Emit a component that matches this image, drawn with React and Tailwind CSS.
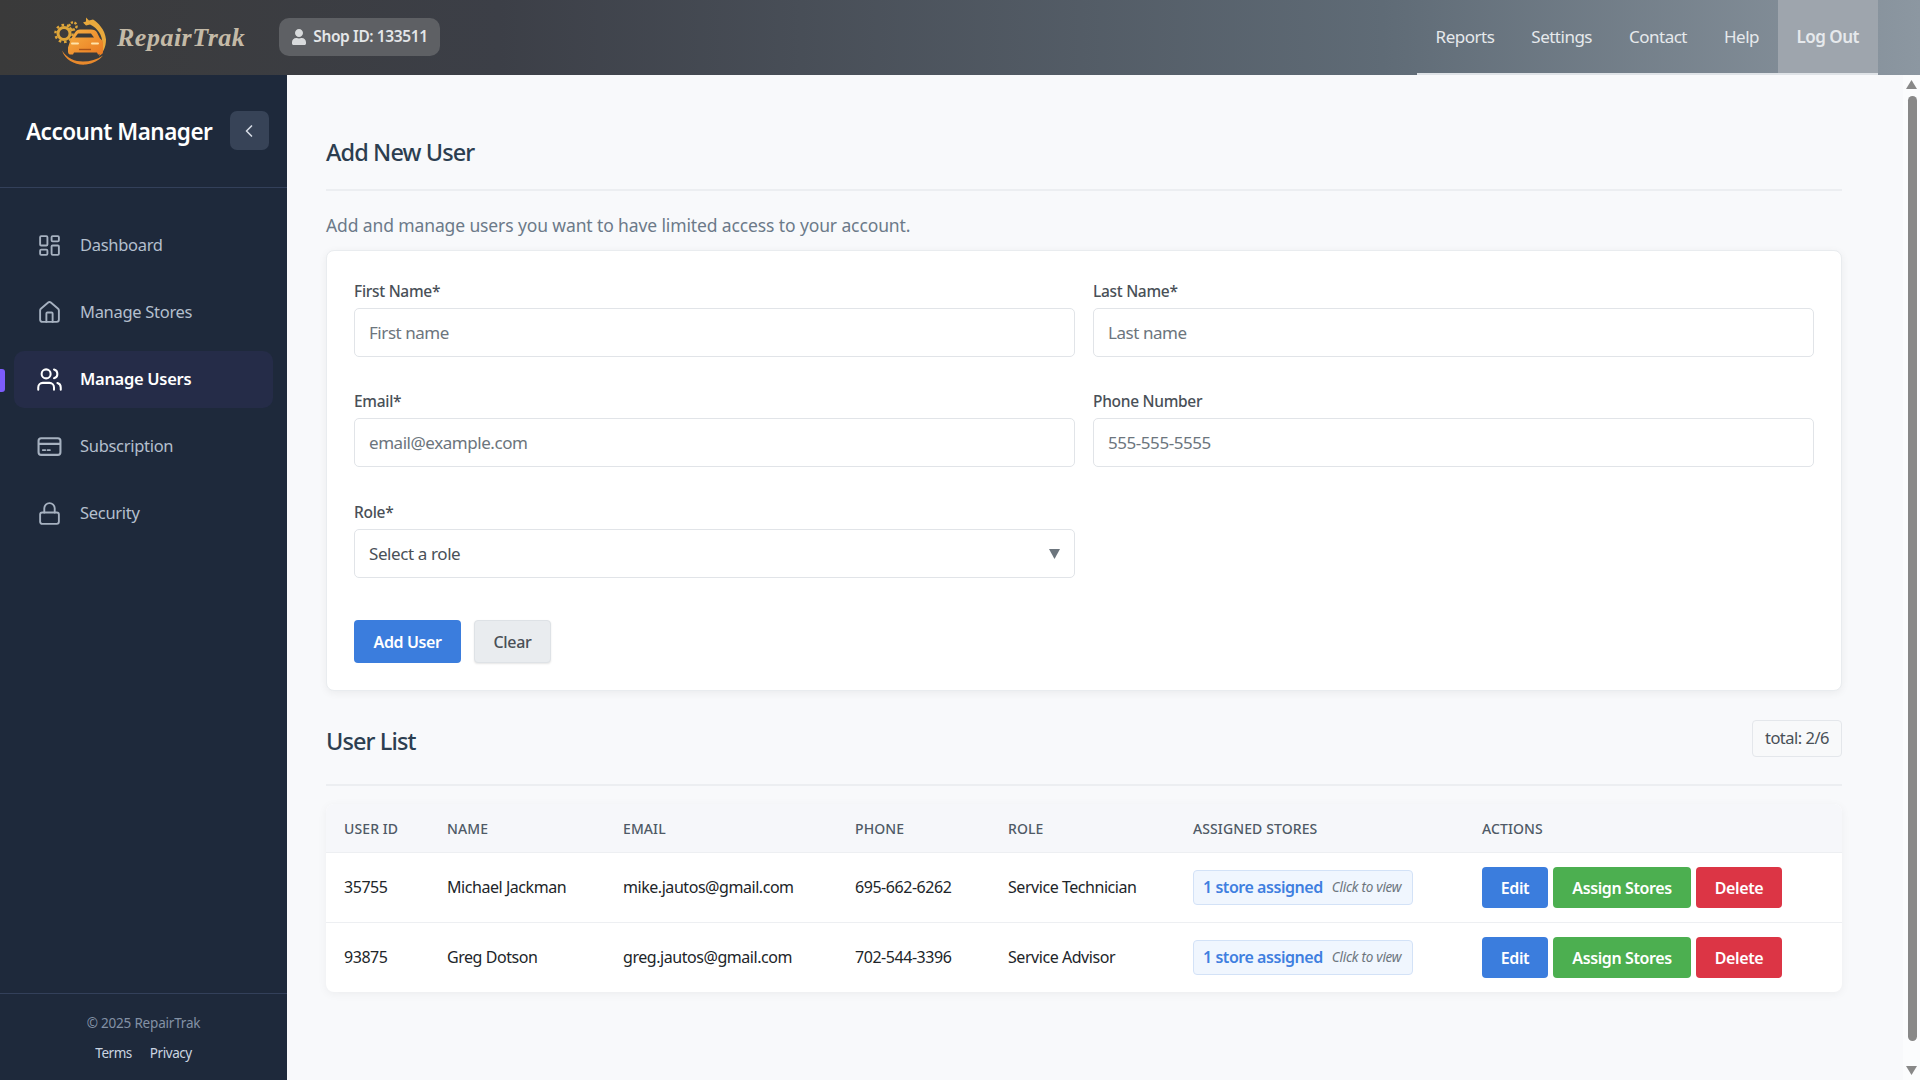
import { ChevronLeft, House, LayoutDashboard, Lock, Users } from "lucide-react";
import { FaUser } from "react-icons/fa";

const font = "font-['Noto_Sans','Open_Sans',sans-serif]";

const Logo = () => (
  <svg viewBox="0 -2.5 60 60" className="w-[60px] h-[60px] shrink-0">
    <defs>
      <linearGradient id="carFill" x1="0" y1="0" x2="1" y2="1">
        <stop offset="0" stopColor="#f6b042" />
        <stop offset="1" stopColor="#ea7a22" />
      </linearGradient>
    </defs>
    <circle cx="14" cy="23" r="6" fill="none" stroke="#dda53a" strokeWidth="3" />
    <circle cx="14" cy="23" r="8.6" fill="none" stroke="#dda53a" strokeWidth="2.4" strokeDasharray="2.6 2.8" />
    <circle cx="23" cy="15.5" r="3.6" fill="none" stroke="#dda53a" strokeWidth="2.4" strokeDasharray="2.2 1.4" />
    <path d="M36 7 l3 3 4-1 c5 3 12 10 13 20 c0 8-3 13-7 17 c3-6 4-11 3-17 c-1-7-7-13-12-15 l-4 1 -3-3 3-1 z" fill="#e9a93c" />
    <path d="M18 37 l3-9 c1-1 2-3 4-6 c1-2 3-3 5-3 h11 c3 0 5 1 6 3 l3 6 c2 1 3 3 3 5 v8 c0 2-1 3-2 3 h-3 l-1-2 h-23 l-1 2 h-3 c-1 0-2-1-2-3 z" fill="url(#carFill)" />
    <path d="M25 27 l3-4 h13 l3 4 z" fill="#3a3a3a" />
    <path d="M22 33 h6 M42 33 h6" stroke="#ffe2a8" strokeWidth="2" strokeLinecap="round" />
    <path d="M29 39 h12" stroke="#a9541a" strokeWidth="1.4" />
    <path d="M12 40 c3 10 14 15 24 14 c7-1 13-4 17-9 c-6 4-13 6-20 6 c-8 0-16-3-21-11 z" fill="#e8892c" />
  </svg>
);

const CardIcon = ({ className }) => (
  <svg viewBox="0 0 24 24" fill="none" stroke="currentColor" strokeWidth="2" strokeLinecap="round" className={className}>
    <rect x="1.5" y="4" width="21" height="16" rx="2.5" />
    <path d="M2 9.5h20" />
    <path d="M5.5 15.5h2.5M10 15.5h2.5" strokeWidth="1.6" />
  </svg>
);

const navItems = [
  { label: "Dashboard", Icon: LayoutDashboard, size: "w-[25px] h-[25px]" },
  { label: "Manage Stores", Icon: House, size: "w-[25px] h-[25px]" },
  { label: "Manage Users", Icon: Users, size: "w-[27px] h-[27px] -mx-[1px]", active: true },
  { label: "Subscription", Icon: CardIcon, size: "w-[25px] h-[25px]" },
  { label: "Security", Icon: Lock, size: "w-[25px] h-[25px]" },
];

const users = [
  { id: "35755", name: "Michael Jackman", email: "mike.jautos@gmail.com", phone: "695-662-6262", role: "Service Technician" },
  { id: "93875", name: "Greg Dotson", email: "greg.jautos@gmail.com", phone: "702-544-3396", role: "Service Advisor" },
];

const columns = ["USER ID", "NAME", "EMAIL", "PHONE", "ROLE", "ASSIGNED STORES", "ACTIONS"];

function Field({ label, placeholder }) {
  return (
    <div className="flex flex-col">
      <label className="text-[15.5px] leading-[20px] font-medium text-[#495057] tracking-[-0.3px] mb-[7px]">{label}</label>
      <input
        placeholder={placeholder}
        className="h-[49px] px-[14px] bg-white border border-[#e1e4e8] rounded-[5px] text-[17px] tracking-[-0.45px] outline-none placeholder:text-[#6c757d]"
      />
    </div>
  );
}

function Header() {
  return (
    <header className="h-[75px] shrink-0 flex items-center pl-[50px] pr-[42px] bg-[linear-gradient(90deg,#3a3a3a_0%,#3c3f47_26%,#5f6b76_72%,#8c97a1_100%)]">
      <Logo />
      <span className="ml-[7px] w-[162px] font-['Liberation_Serif',serif] font-bold italic text-[26px] leading-none tracking-[0.5px] text-[#c4baa7]">
        RepairTrak
      </span>
      <div className="h-[38px] w-[161px] mb-[1px] flex items-center justify-center gap-[6px] rounded-[10px] bg-[#5e6064] text-[#e4e6e8] text-[15.5px] font-semibold tracking-[-0.4px]">
        <FaUser className="w-[16px] h-[16px] text-[#d8dadc]" />
        Shop ID: 133511
      </div>
      <nav className="ml-auto h-full flex border-b-2 border-[#dfe3e7] text-[17px] tracking-[-0.5px] text-[#e6e9ec]">
        {["Reports", "Settings", "Contact", "Help"].map((item) => (
          <a key={item} className="flex items-center px-[18.5px]">{item}</a>
        ))}
        <a className="flex items-center px-[19px] bg-[#9ea5ad] font-semibold">Log Out</a>
      </nav>
    </header>
  );
}

function Sidebar() {
  return (
    <aside className="w-[287px] shrink-0 flex flex-col bg-[#1e293b]">
      <div className="h-[113px] shrink-0 flex items-center justify-between pl-[26px] pr-[18px] border-b border-[#33405a]">
        <span className="text-white text-[22.5px] font-semibold tracking-[-0.5px] pt-[1px]">Account Manager</span>
        <button className="w-[39px] h-[39px] mb-[1px] flex items-center justify-center rounded-[7px] bg-[#374357] text-[#d5dbe4]">
          <ChevronLeft className="w-[20px] h-[20px] -ml-[1px]" strokeWidth={2} />
        </button>
      </div>
      <div className="flex flex-col gap-[10px] pt-[29px] px-[14px]">
        {navItems.map(({ label, Icon, size, active }) => (
          <div
            key={label}
            className={
              active
                ? "relative h-[57px] flex items-center pl-[23px] rounded-[10px] bg-[#252c48] text-white font-semibold"
                : "h-[57px] flex items-center pl-[23px] rounded-[10px] text-[#b4bfcd]"
            }
          >
            {active && <span className="absolute left-[-14px] top-[18px] w-[5px] h-[23px] rounded-r-[3px] bg-[#7c5cfc]" />}
            <Icon className={`${size} ${active ? "text-white" : "text-[#a6b1c0]"}`} strokeWidth={1.8} />
            <span className="ml-[18px] text-[16.5px] tracking-[-0.3px]">{label}</span>
          </div>
        ))}
      </div>
      <div className="mt-auto h-[87px] border-t border-[#33405a] flex flex-col items-center pt-[19px]">
        <span className="text-[13.5px] leading-[20px] tracking-[-0.2px] text-[#8391a5]">© 2025 RepairTrak</span>
        <div className="flex gap-[18px] mt-[10px] text-[13.5px] leading-[20px] tracking-[-0.45px] text-[#cbd5e1]">
          <a>Terms</a>
          <a>Privacy</a>
        </div>
      </div>
    </aside>
  );
}

function UserTable() {
  return (
    <div className="rounded-[8px] bg-white shadow-[0_2px_10px_rgba(0,0,0,0.05)] overflow-hidden">
      <table className="w-full table-fixed border-collapse">
        <colgroup>
          <col className="w-[103px]" />
          <col className="w-[176px]" />
          <col className="w-[232px]" />
          <col className="w-[153px]" />
          <col className="w-[185px]" />
          <col className="w-[289px]" />
          <col />
        </colgroup>
        <thead>
          <tr className="h-[48px] bg-[#f6f7fa] border-b border-[#edeff2]">
            {columns.map((col) => (
              <th key={col} className="px-[18px] pt-[1px] text-left text-[14px] font-medium text-[#4f5a66] tracking-[0.1px]">{col}</th>
            ))}
          </tr>
        </thead>
        <tbody>
          {users.map((u) => (
            <tr key={u.id} className="h-[70px] border-b border-[#edeff2] last:border-b-0 text-[16px] tracking-[-0.45px] text-[#212529]">
              <td className="px-[18px]">{u.id}</td>
              <td className="px-[18px]">{u.name}</td>
              <td className="px-[18px]">{u.email}</td>
              <td className="px-[18px]">{u.phone}</td>
              <td className="px-[18px]">{u.role}</td>
              <td className="px-[18px]">
                <div className="h-[35px] w-[220px] flex items-center pl-[9px] rounded-[4px] border border-[#d3e2f7] bg-[#f0f6fe]">
                  <span className="text-[16px] font-semibold text-[#3f7fe0] tracking-[-0.45px]">1 store assigned</span>
                  <span className="ml-[9px] text-[13.5px] italic text-[#6c757d] tracking-[-0.25px]">Click to view</span>
                </div>
              </td>
              <td className="px-[18px]">
                <div className="flex gap-[5px] text-white text-[16px] font-semibold tracking-[-0.4px]">
                  <button className="w-[66px] h-[41px] pt-[2px] rounded-[4px] bg-[#3b7ddd]">Edit</button>
                  <button className="w-[138px] h-[41px] pt-[2px] rounded-[4px] bg-[#4caf50]">Assign Stores</button>
                  <button className="w-[86px] h-[41px] pt-[2px] rounded-[4px] bg-[#dc3545]">Delete</button>
                </div>
              </td>
            </tr>
          ))}
        </tbody>
      </table>
    </div>
  );
}

export default function App() {
  return (
    <div className={`h-screen w-screen overflow-hidden flex flex-col ${font}`}>
      <Header />
      <div className="flex-1 min-h-0 flex">
        <Sidebar />
        <main className="flex-1 min-w-0 bg-[#f8f9fb] pl-[39px] pr-[61px]">
          <h2 className="mt-[59px] text-[23.5px] leading-[36px] font-medium tracking-[-0.9px] text-[#2c3e50]">Add New User</h2>
          <div className="mt-[19px] h-[2px] bg-[#eceef1]" />
          <p className="mt-[22px] text-[17.5px] leading-[24px] tracking-[-0.12px] text-[#6c7a89]">
            Add and manage users you want to have limited access to your account.
          </p>
          <section className="mt-[13px] h-[441px] rounded-[8px] bg-white border border-[#e9ecef] shadow-[0_2px_8px_rgba(0,0,0,0.06)] pl-[27px] pr-[27px] pt-[30px]">
            <div className="grid grid-cols-2 gap-x-[18px] gap-y-[34px]">
              <Field label="First Name*" placeholder="First name" />
              <Field label="Last Name*" placeholder="Last name" />
              <Field label="Email*" placeholder="email@example.com" />
              <Field label="Phone Number" placeholder="555-555-5555" />
              <div className="flex flex-col mt-[1px]">
                <label className="text-[15.5px] leading-[20px] font-medium text-[#495057] tracking-[-0.3px] mb-[7px]">Role*</label>
                <div className="h-[49px] flex items-center justify-between px-[14px] bg-white border border-[#e1e4e8] rounded-[5px] text-[17px] tracking-[-0.4px] text-[#495057]">
                  Select a role
                  <svg viewBox="0 0 10 9" className="w-[11px] h-[10px]"><path d="M0 0h10L5 9z" fill="#6c757d" /></svg>
                </div>
              </div>
            </div>
            <div className="mt-[42px] flex gap-[13px]">
              <button className="w-[107px] h-[43px] rounded-[4px] bg-[#3b7ddd] text-white text-[16px] font-semibold tracking-[-0.4px]">Add User</button>
              <button className="w-[77px] h-[43px] rounded-[4px] bg-[#e9ecef] border border-[#dee2e6] shadow-[0_1px_2px_rgba(0,0,0,0.1)] text-[#495057] text-[16px] font-medium tracking-[-0.3px]">Clear</button>
            </div>
          </section>
          <div className="mt-[29px] flex items-center justify-between h-[37px]">
            <h2 className="pt-[6px] text-[23.5px] font-medium tracking-[-0.9px] text-[#2c3e50]">User List</h2>
            <span className="h-[37px] w-[90px] flex items-center justify-center rounded-[4px] border border-[#e4e7eb] bg-[#f8f9fa] text-[16.5px] tracking-[-0.5px] text-[#495057]">total: 2/6</span>
          </div>
          <div className="mt-[27px] h-[2px] bg-[#eceef1]" />
          <div className="mt-[18px]">
            <UserTable />
          </div>
        </main>
        <div className="w-[17px] shrink-0 flex flex-col items-center bg-[#fbfcfd] pt-[5px] pb-[5px]">
          <svg viewBox="0 0 10 8" className="w-[11px] h-[9px] shrink-0"><path d="M5 0l5 8H0z" fill="#888" /></svg>
          <div className="w-[9px] flex-1 ml-[2px] mt-[7px] mb-[25px] rounded-full bg-[#888]" />
          <svg viewBox="0 0 10 8" className="w-[11px] h-[9px] shrink-0"><path d="M5 8L0 0h10z" fill="#888" /></svg>
        </div>
      </div>
    </div>
  );
}
